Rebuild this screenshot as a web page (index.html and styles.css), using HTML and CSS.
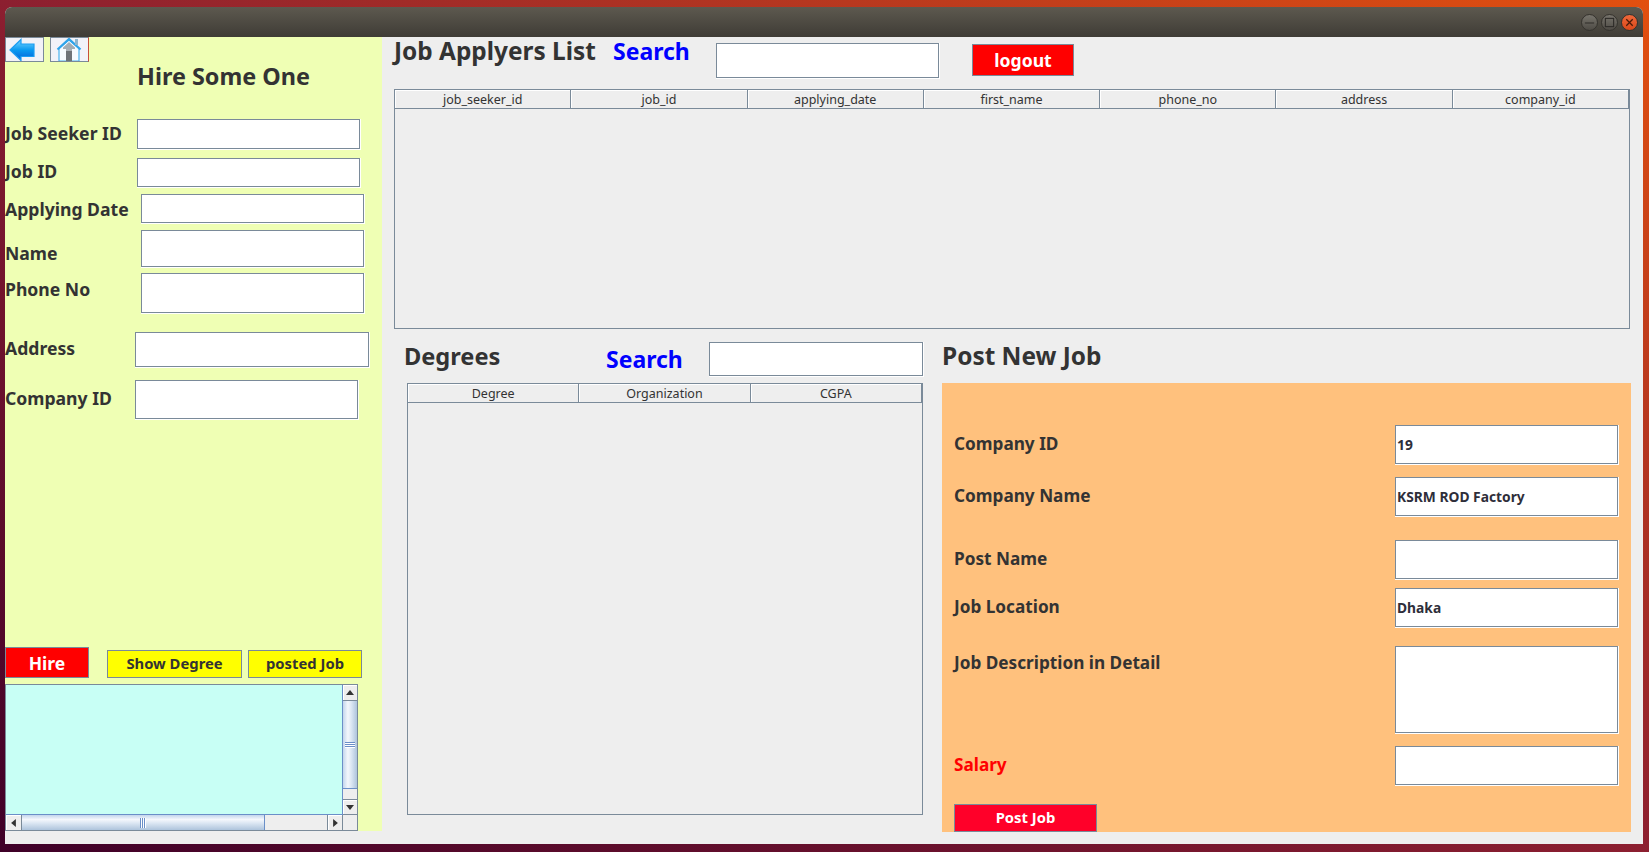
FILE: index.html
```html
<!DOCTYPE html>
<html lang="en">
<head>
<meta charset="UTF-8" />
<meta name="viewport" content="width=device-width, initial-scale=1" />
<title>Job Applyers List</title>
<link rel="stylesheet" href="styles.css">
</head>
<body>

<div class="window">
  <div class="titlebar">
    <span class="win-btn"><svg width="12" height="12" viewBox="0 0 12 12"><path d="M1 6.5h10" stroke="#2e2c28" stroke-width="1.2"/></svg></span>
    <span class="win-btn"><svg width="12" height="12" viewBox="0 0 12 12"><rect x="1.5" y="1.5" width="9" height="9" fill="none" stroke="#2e2c28" stroke-width="1.2"/></svg></span>
    <span class="win-btn win-close"><svg width="12" height="12" viewBox="0 0 12 12"><path d="M2.5 2.5l7 7M9.5 2.5l-7 7" stroke="#4a1a08" stroke-width="1.4"/></svg></span>
  </div>

  <div class="content">
    <aside class="hire">
      <div class="nav">
        <button type="button" class="nav-btn" title="Back">
          <svg width="37" height="23" viewBox="0 0 37 23">
            <defs>
              <linearGradient id="arrowFill" x1="0" y1="0" x2="0" y2="1">
                <stop offset="0" stop-color="#7ad6ff"/>
                <stop offset="0.5" stop-color="#0a9af0"/>
                <stop offset="1" stop-color="#0560d8"/>
              </linearGradient>
            </defs>
            <path d="M4 12L15 1.5V6H28V18.5H15V22.5Z" fill="url(#arrowFill)" stroke="#1c9df2" stroke-width="1.2"/>
          </svg>
        </button>
        <button type="button" class="nav-btn nav-home" title="Home">
          <svg width="36" height="23" viewBox="0 0 36 23">
            <path d="M8 10.5V23H28V10.5L18 2Z" fill="#f6fbff" stroke="#49b2ee" stroke-width="1.2"/>
            <path d="M6.5 11.5L18 1L29.5 11.5" fill="none" stroke="#2fa4ea" stroke-width="2.2"/>
            <path d="M12 9.5L18 4L24 9.5V11H12Z" fill="#a3adb4"/>
            <rect x="24" y="1" width="3" height="6" fill="#8fb6cf"/>
            <rect x="15" y="13" width="6" height="10" fill="#6e7378"/>
            <rect x="15" y="11" width="6" height="2" fill="#a9b0b5"/>
          </svg>
        </button>
      </div>
      <h2 class="hire-title">Hire Some One</h2>

      <div class="row row-first row-a"><label>Job Seeker ID</label><input class="field h31" type="text"></div>
      <div class="row row-a gap8"><label>Job ID</label><input class="field h30" type="text"></div>
      <div class="row row-b gap6"><label class="down3">Applying Date</label><input class="field h30" type="text"></div>
      <div class="row row-b gap6"><label class="down11">Name</label><input class="field h38" type="text"></div>
      <div class="row row-b gap5"><label class="up6">Phone No</label><input class="field h41" type="text"></div>
      <div class="row row-c gap18"><label>Address</label><input class="field h36 wide" type="text"></div>
      <div class="row row-c gap12"><label>Company ID</label><input class="field h40" type="text"></div>

      <div class="actions">
        <button type="button" class="btn btn-hire">Hire</button>
        <button type="button" class="btn btn-yellow btn-degree">Show Degree</button>
        <button type="button" class="btn btn-yellow btn-posted">posted Job</button>
      </div>

      <div class="pane">
        <div class="pane-text"></div>
        <div class="vbar">
          <span class="sb-btn sb-up"><svg width="8" height="5" viewBox="0 0 10 6"><path d="M5 0L10 6H0Z" fill="#333"/></svg></span>
          <span class="thumb-v"><i class="grip-v"></i></span>
          <span class="track-v"></span>
          <span class="sb-btn sb-down"><svg width="8" height="5" viewBox="0 0 10 6"><path d="M0 0H10L5 6Z" fill="#333"/></svg></span>
        </div>
        <div class="hbar">
          <span class="sb-btn sb-left"><svg width="5" height="8" viewBox="0 0 6 10"><path d="M6 0V10L0 5Z" fill="#333"/></svg></span>
          <span class="thumb-h"><i class="grip-h"></i></span>
          <span class="track-h"></span>
          <span class="sb-btn sb-right"><svg width="5" height="8" viewBox="0 0 6 10"><path d="M0 0L6 5L0 10Z" fill="#333"/></svg></span>
        </div>
        <div class="corner"></div>
      </div>
    </aside>

    <main class="main">
      <div class="jobs-head">
        <h2 class="heading heading-lg">Job Applyers List</h2>
        <span class="search search-top">Search</span>
        <input class="field search-box" type="text">
        <button type="button" class="btn btn-logout">logout</button>
      </div>
      <div class="table table-jobs">
        <div class="thead cols-7">
          <span>job_seeker_id</span><span>job_id</span><span>applying_date</span><span>first_name</span><span>phone_no</span><span>address</span><span>company_id</span>
        </div>
      </div>

      <div class="lower">
        <section class="degrees">
          <div class="degrees-head">
            <h2 class="heading">Degrees</h2>
            <span class="search search-deg">Search</span>
            <input class="field degree-box" type="text">
          </div>
          <div class="table table-degrees">
            <div class="thead cols-3">
              <span>Degree</span><span>Organization</span><span>CGPA</span>
            </div>
          </div>
        </section>

        <section class="post">
          <h2 class="heading heading-lg post-title">Post New Job</h2>
          <form class="post-form">
            <div class="post-row"><label>Company ID</label><input class="field h40 post-field" type="text" value="19"></div>
            <div class="post-row gap12"><label>Company Name</label><input class="field h40 post-field" type="text" value="KSRM ROD Factory"></div>
            <div class="post-row gap23"><label>Post Name</label><input class="field h40 post-field" type="text"></div>
            <div class="post-row gap8"><label>Job Location</label><input class="field h40 post-field" type="text" value="Dhaka"></div>
            <div class="post-row gap18 post-top"><label>Job Description in Detail</label><textarea class="field h88 post-field"></textarea></div>
            <div class="post-row gap12"><label class="salary">Salary</label><input class="field h40 post-field" type="text"></div>
            <button type="button" class="btn btn-post">Post Job</button>
          </form>
        </section>
      </div>
    </main>
  </div>
</div>

</body>
</html>
```

FILE: styles.css
```css
* {
  box-sizing: border-box;
}
html, body {
  height: 100%;
}
body {
  margin: 0;
  padding: 7px 6px 8px 5px;
  overflow: hidden;
  font-family: "Noto Sans", sans-serif;
  color: #333;
  background: linear-gradient(to top right, #3f0028, #8c1f30 50%, #e2500f);
}
h2 {
  margin: 0;
}

/* window frame */
.window {
  height: 837px;
  display: flex;
  flex-direction: column;
  background: #eee;
  border-radius: 7px 7px 0 0;
  overflow: hidden;
}
.titlebar {
  height: 30px;
  flex: none;
  display: flex;
  justify-content: flex-end;
  align-items: center;
  gap: 3px;
  padding: 0 5px 0 0;
  background: linear-gradient(#5d594f, #3f3c36);
}
.win-btn {
  width: 17px;
  height: 17px;
  border-radius: 50%;
  display: flex;
  align-items: center;
  justify-content: center;
  background: linear-gradient(#77746c, #4e4b45);
  border: 1px solid #35332e;
}
.win-btn svg {
  width: 11px;
  height: 11px;
}
.win-close {
  background: linear-gradient(#f0683a, #d9481a);
}
.content {
  flex: 1;
  display: flex;
  min-height: 0;
}

/* inputs */
.field {
  display: block;
  width: 224px;
  padding: 0 2px;
  margin: 0;
  background: #fff;
  border: 0 solid #fff;
  border-width: 0 1px 1px 0;
  box-shadow: inset 0 0 0 1px #7a8a99;
  border-radius: 0;
  outline: none;
  resize: none;
  font: 700 13.8px "Noto Sans", sans-serif;
  color: #2e2e3a;
}
.h30 { height: 30px; }
.h31 { height: 31px; }
.h36 { height: 36px; }
.h38 { height: 38px; }
.h40 { height: 40px; }
.h41 { height: 41px; }
.h88 { height: 88px; }
.wide { width: 235px; }

.gap5 { margin-top: 5px; }
.gap6 { margin-top: 6px; }
.gap8 { margin-top: 8px; }
.gap12 { margin-top: 12px; }
.gap18 { margin-top: 18px; }
.gap23 { margin-top: 23px; }

/* left panel */
.hire {
  width: 377px;
  height: 794px;
  flex: none;
  display: flex;
  flex-direction: column;
  background: #efffb4;
}
.nav {
  display: flex;
  gap: 6px;
  height: 25px;
  flex: none;
}
.nav-btn {
  width: 39px;
  height: 25px;
  padding: 0;
  display: flex;
  background: #f2f2f8;
  border: 1px solid #7a8a99;
}
.nav-home {
  border-right-color: #c8503a;
}
.hire-title {
  height: 30px;
  margin-top: -1px;
  margin-bottom: 1px;
  margin-left: 132px;
  font-size: 23.4px;
  line-height: 30px;
  white-space: nowrap;
}
.row {
  display: flex;
  align-items: center;
}
.row label, .post-row label {
  font-size: 17.6px;
  line-height: 20px;
  font-weight: 700;
  padding-bottom: 4px;
  white-space: nowrap;
}
.post-row label {
  font-size: 17.2px;
  padding-bottom: 2px;
}
.row-first { margin-top: 27px; }
.row-a label { width: 132px; }
.row-b label { width: 136px; }
.row-c label { width: 130px; }
.down3 { margin-top: 3px; }
.down11 { margin-top: 11px; }
.up6 { margin-bottom: 6px; }

.btn {
  padding: 0;
  border: 1px solid #7a8a99;
  font: 700 14.8px "Noto Sans", sans-serif;
  color: #333;
}
.btn-yellow {
  height: 28px;
  padding-bottom: 2px;
  background: #ff0;
}
.actions {
  margin-top: auto;
  display: flex;
  align-items: flex-end;
}
.btn-hire {
  width: 84px;
  height: 31px;
  background: #f00;
  color: #fff;
  font-size: 17.5px;
}
.btn-degree {
  width: 135px;
  margin-left: 18px;
}
.btn-posted {
  width: 114px;
  margin-left: 6px;
}

/* scroll pane */
.pane {
  width: 353px;
  height: 147px;
  margin-top: 6px;
  display: grid;
  grid-template-columns: 1fr 15px;
  grid-template-rows: 1fr 15px;
  border: 1px solid #7a8a99;
  background: #eee;
}
.pane-text {
  background: #c8fff5;
  border-bottom: 1px solid #6a8fc8;
}
.vbar {
  display: flex;
  flex-direction: column;
  border-left: 1px solid #6a8fc8;
}
.hbar {
  display: flex;
}
.corner {
  background: #eee;
  border-left: 1px solid #7a8a99;
}
.sb-btn {
  flex: none;
  display: flex;
  align-items: center;
  justify-content: center;
  background: #eee;
  box-shadow: inset 1px 1px 0 #fff;
}
.sb-up { height: 16px; border-bottom: 1px solid #7a8a99; }
.sb-down { height: 16px; border-top: 1px solid #7a8a99; border-bottom: 1px solid #7a8a99; }
.sb-left { width: 16px; border-right: 1px solid #7a8a99; }
.sb-right { width: 15px; border-left: 1px solid #7a8a99; }
.thumb-v {
  height: 88px;
  flex: none;
  display: flex;
  align-items: center;
  justify-content: center;
  background: linear-gradient(to right, #c4d6ec, #f4f7fc 35%, #dbe6f3 60%, #aec4dc);
  border-bottom: 1px solid #6a8fc8;
}
.track-v {
  flex: 1;
}
.thumb-h {
  width: 243px;
  flex: none;
  display: flex;
  align-items: center;
  justify-content: center;
  background: linear-gradient(#c4d6ec, #f4f7fc 30%, #dbe6f3 55%, #aec4dc);
  border-right: 1px solid #6a8fc8;
}
.track-h {
  flex: 1;
}
.grip-v {
  width: 10px;
  height: 6px;
  background: repeating-linear-gradient(#6a8fc8 0 1px, #fff 1px 2px);
}
.grip-h {
  width: 6px;
  height: 10px;
  background: repeating-linear-gradient(to right, #6a8fc8 0 1px, #fff 1px 2px);
}

/* right side */
.main {
  flex: 1;
  min-width: 0;
}
.heading {
  font-size: 23.6px;
  line-height: 30px;
  white-space: nowrap;
}
.heading-lg {
  font-size: 24.4px;
}
.search {
  font-size: 23px;
  font-weight: 700;
  line-height: 30px;
  color: #00f;
}
.jobs-head {
  height: 52px;
  padding-left: 12px;
  display: flex;
  align-items: flex-start;
}
.jobs-head .heading {
  width: 219px;
  margin-top: -1px;
}
.search-top {
  width: 103px;
  margin-top: -1px;
}
.search-box {
  width: 224px;
  height: 36px;
  margin-top: 6px;
}
.btn-logout {
  width: 102px;
  height: 32px;
  margin-top: 7px;
  margin-left: 32px;
  background: #f00;
  color: #fff;
  font-size: 17.6px;
}
.table {
  background: #eee;
  border: 1px solid #7a8a99;
}
.table-jobs {
  width: 1236px;
  height: 240px;
  margin-left: 12px;
}
.thead {
  height: 19px;
  display: grid;
  border-bottom: 1px solid #7a8a99;
}
.thead span {
  height: 18px;
  text-align: center;
  font-size: 12.5px;
  line-height: 19px;
  border-right: 1px solid #7a8a99;
  box-shadow: inset 1px 1px 0 #fff;
}
.cols-7 {
  grid-template-columns: repeat(7, 1fr);
}
.cols-3 {
  grid-template-columns: repeat(3, 1fr);
}
.lower {
  display: flex;
  margin-top: 1px;
}
.degrees {
  width: 560px;
  flex: none;
  padding-left: 22px;
}
.degrees-head {
  height: 53px;
  padding-top: 12px;
  display: flex;
  align-items: flex-start;
}
.degrees-head .heading {
  width: 202px;
  margin-top: -1px;
}
.search-deg {
  width: 103px;
  margin-top: 2px;
}
.degree-box {
  width: 215px;
  height: 35px;
}
.table-degrees {
  width: 516px;
  height: 432px;
  margin-left: 3px;
}
.post {
  width: 689px;
  flex: none;
}
.post-title {
  height: 53px;
  padding-top: 11px;
  line-height: 30px;
}
.post-form {
  height: 449px;
  padding: 42px 12px 0;
  background: #ffc17d;
}
.post-row {
  display: flex;
  justify-content: space-between;
  align-items: center;
}
.post-top {
  align-items: flex-start;
}
.post-top label {
  margin-top: 7px;
}
.post-field {
  flex: none;
}
.salary {
  color: #f00;
}
.btn-post {
  display: block;
  width: 143px;
  height: 28px;
  margin-top: 18px;
  padding-bottom: 2px;
  background: #ff0029;
  color: #fff;
}
```
